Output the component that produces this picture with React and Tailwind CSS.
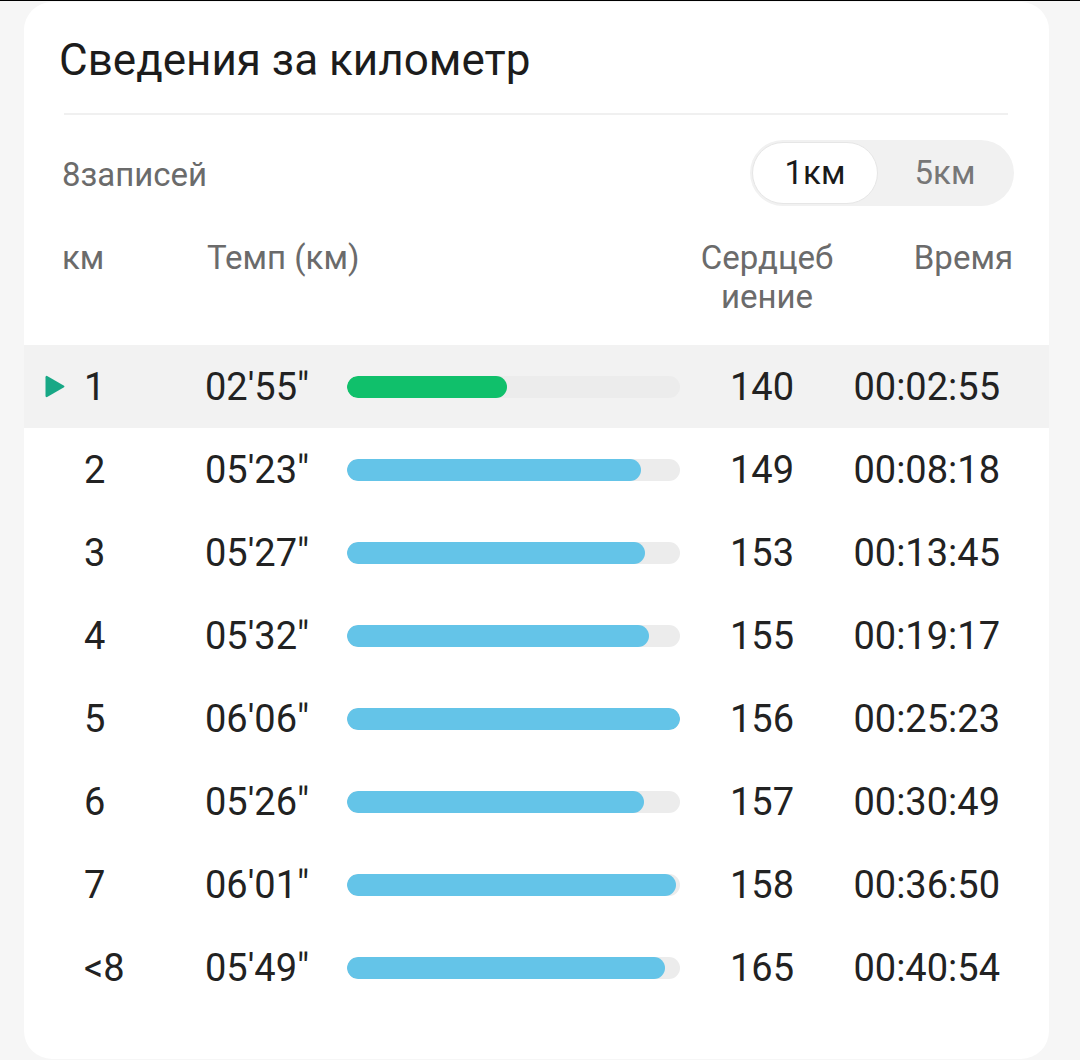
import React from "react";

const rows = [
  { km: "1", pace: "02'55\"", fill: 160, hr: "140", time: "00:02:55", active: true },
  { km: "2", pace: "05'23\"", fill: 294, hr: "149", time: "00:08:18" },
  { km: "3", pace: "05'27\"", fill: 298, hr: "153", time: "00:13:45" },
  { km: "4", pace: "05'32\"", fill: 302, hr: "155", time: "00:19:17" },
  { km: "5", pace: "06'06\"", fill: 333, hr: "156", time: "00:25:23" },
  { km: "6", pace: "05'26\"", fill: 297, hr: "157", time: "00:30:49" },
  { km: "7", pace: "06'01\"", fill: 329, hr: "158", time: "00:36:50" },
  { km: "<8", pace: "05'49\"", fill: 318, hr: "165", time: "00:40:54" },
];

function PlayMark() {
  return (
    <svg className="shrink-0 block" width="20" height="23" viewBox="0 0 20 23">
      <path
        d="M2.6 1.2 Q0.5 0 0.5 2.4 L0.5 20.6 Q0.5 23 2.6 21.8 L18.6 12.6 Q20.3 11.5 18.6 10.4 Z"
        fill="#18a886"
      />
    </svg>
  );
}

function KmRow({ row }) {
  return (
    <div
      className={`flex items-center h-[83px] pl-[21px] text-[38px] leading-none text-[#222] ${
        row.active ? "bg-[#f2f2f2]" : ""
      }`}
    >
      <div className="w-[39px] shrink-0 flex items-center">{row.active && <PlayMark />}</div>
      <div className="w-[121px] shrink-0">{row.km}</div>
      <div className="w-[142px] shrink-0">{row.pace}</div>
      <div className="w-[333px] shrink-0 h-[22px] rounded-full bg-[#ececec] overflow-hidden">
        <div
          className={`h-full rounded-full ${row.active ? "bg-[#10c06b]" : "bg-[#64c4e8]"}`}
          style={{ width: row.fill }}
        />
      </div>
      <div className="w-[164px] shrink-0 text-center">{row.hr}</div>
      <div className="flex-1 text-right pr-[49px]">{row.time}</div>
    </div>
  );
}

export default function App() {
  return (
    <div className="min-h-[1060px] bg-[#f6f6f6] border-t border-black font-['Roboto',sans-serif]">
      <div className="ml-[24px] mt-px w-[1025px] h-[1057px] bg-white rounded-[28px]">
        {/* Title */}
        <div className="pt-[34px] pl-[35px] text-[44px] leading-[48px] text-[#1c1c1c]">
          Сведения за километр
        </div>
        <div className="mt-[29px] ml-[40px] mr-[41px] h-[2px] bg-[#f0f0f0]" />

        {/* Count + unit toggle */}
        <div className="mt-[25px] flex items-center justify-between pl-[38px] pr-[35px]">
          <div className="text-[33px] text-[#6b6b6b] pt-[3px]">8записей</div>
          <div className="flex h-[66px] w-[264px] rounded-full bg-[#f1f1f1] p-[2px]">
            <div className="w-[126px] rounded-full bg-white border border-[#e6e6e6] flex items-center justify-center text-[33px] text-[#1a1a1a]">
              1км
            </div>
            <div className="flex-1 flex items-center justify-center text-[33px] text-[#777]">
              5км
            </div>
          </div>
        </div>

        {/* Column headers */}
        <div className="mt-[32px] flex pl-[38px] pr-[36px] text-[33px] leading-[39px] text-[#6b6b6b]">
          <div className="w-[145px]">км</div>
          <div className="flex-1">Темп (км)</div>
          <div className="w-[150px] text-center">
            Сердцеб
            <br />
            иение
          </div>
          <div className="w-[171px] text-right">Время</div>
        </div>

        {/* Rows */}
        <div className="mt-[29px]">
          {rows.map((r) => (
            <KmRow key={r.km} row={r} />
          ))}
        </div>
      </div>
    </div>
  );
}
